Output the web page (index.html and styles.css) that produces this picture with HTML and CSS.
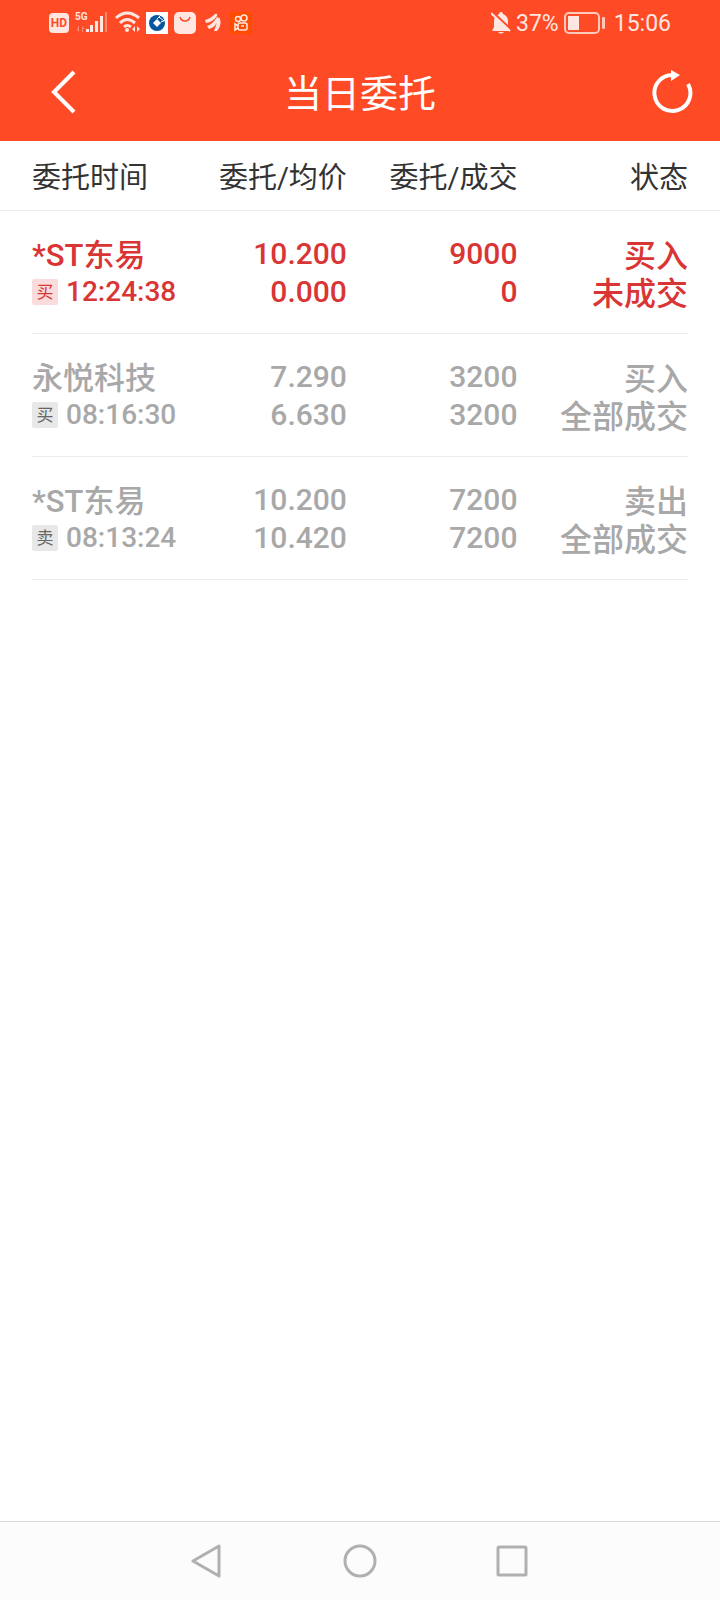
FILE: index.html
```html
<!DOCTYPE html>
<html lang="zh-CN">
<head>
  <meta charset="UTF-8" />
  <meta name="viewport" content="width=device-width, initial-scale=1.0" />
  <title>当日委托</title>
  <link rel="stylesheet" href="styles.css">
</head>
<body>
  <header class="top">
    <div class="status-bar">
      <div class="status-left">
        <span class="hd">HD</span>
        <svg class="signal" width="34" height="24" viewBox="0 0 34 24" fill="#ffe6e0">
          <text x="0" y="9" class="net">5G</text>
          <g opacity="0.4">
            <path d="M4 15v6l-3-3h2v-3zM7 15v6h1v-3h2z" />
            <path d="M30 1h2v20h-2z" />
          </g>
          <path d="M11 18h3v3h-3zM15 14h3v7h-3zM20 10h3v11h-3zM25 5h3v16h-3z" />
        </svg>
        <svg width="25" height="24" viewBox="0 0 25 24" fill="none" stroke="#ffe6e0" stroke-width="3">
          <path d="M1 7Q12 -3 24 7M5 12Q12 5 20 12M9 16Q12 13 16 16" />
          <circle cx="12" cy="19" r="2" fill="#ffe6e0" stroke="none" />
          <path d="M20 15v6l-3-3zM22 15v6l3-3z" fill="#ffe6e0" stroke="none" />
        </svg>
        <svg width="22" height="22" viewBox="0 0 22 22">
          <path fill="#fff" d="M0 0h22v22H0z" />
          <circle cx="11" cy="11" r="8" fill="#07569e" />
          <path fill="#fff" d="M11 7l4 4-4 4-4-4z" />
          <path stroke="#fff" d="M11 7l4-4M15 10l5-2M13 5l5 4" />
        </svg>
        <svg width="22" height="22" viewBox="0 0 22 22">
          <rect width="22" height="22" rx="5" fill="#ffe6e0" />
          <path d="M6 5q1 4 5 4t5-4" fill="none" stroke="#ff4a26" stroke-width="1.4" />
        </svg>
        <svg class="leaf" width="18" height="20" viewBox="0 0 18 20" fill="#ffe6e0">
          <path d="M1 7Q6 6 11 1Q14 0 13 3Q9 9 2 10zM3 13Q9 11 13 4Q15 4 14 7Q12 14 5 16zM10 18Q12 13 14 6Q15 3 16 6Q18 12 13 18z" />
        </svg>
        <svg width="22" height="22" viewBox="0 0 22 22" fill="none" stroke="#ffe6e0" stroke-width="1.6">
          <path fill="#ff4b00" stroke="none" d="M0 0h22v22H0z" />
          <circle cx="8" cy="7" r="2.5" />
          <circle cx="14" cy="6" r="3" />
          <rect x="8" y="11" width="9" height="7" rx="2" />
          <path d="M8 14l-3-2v6l3-2M11 14h3" />
        </svg>
      </div>
      <div class="status-right">
        <svg width="20" height="24" viewBox="0 0 20 24" fill="#ffe6e0">
          <path d="M10 1q2 0 2 2q5 2 5 7v6l2 4H1l2-4v-6q0-5 5-7q0-2 2-2zM7 21h6q-3 3-6 0z" />
          <path d="M0 0l21 20" stroke="#ff4a26" stroke-width="3" />
          <path d="M0 2l19 18" stroke="#ffe6e0" stroke-width="2" />
        </svg>
        <span>37%</span>
        <svg class="battery" width="42" height="22" viewBox="0 0 42 22">
          <rect x="1" y="1" width="34" height="20" rx="4" fill="none" stroke="#ffc9bc" stroke-width="2" />
          <path d="M4 4h11v14H4z" fill="#ffe6e0" />
          <rect x="38" y="5" width="3" height="12" rx="1" fill="#ffc9bc" />
        </svg>
        <span>15:06</span>
      </div>
    </div>
    <div class="title-bar">
      <button type="button" class="icon-btn" aria-label="返回">
        <svg width="26" height="44" viewBox="0 0 26 44" fill="none" stroke="#fff" stroke-width="4">
          <path d="M24 2L4 22l20 20" />
        </svg>
      </button>
      <h1>当日委托</h1>
      <button type="button" class="icon-btn" aria-label="刷新">
        <svg width="42" height="46" viewBox="0 0 42 46">
          <path d="M37 15A18 18 0 1 1 22 6" fill="none" stroke="#fff" stroke-width="4" />
          <path d="M20 1l9 5-9 6z" fill="#fff" />
        </svg>
      </button>
    </div>
  </header>

  <main>
    <table class="orders">
      <thead>
        <tr>
          <th scope="col">委托时间</th>
          <th scope="col">委托/均价</th>
          <th scope="col">委托/成交</th>
          <th scope="col">状态</th>
        </tr>
      </thead>
      <tbody>
        <tr class="pending">
          <td>*ST东易<div class="time"><span class="tag">买</span>12:24:38</div></td>
          <td>10.200<br />0.000</td>
          <td>9000<br />0</td>
          <td>买入<br />未成交</td>
        </tr>
        <tr>
          <td>永悦科技<div class="time"><span class="tag">买</span>08:16:30</div></td>
          <td>7.290<br />6.630</td>
          <td>3200<br />3200</td>
          <td>买入<br />全部成交</td>
        </tr>
        <tr>
          <td>*ST东易<div class="time"><span class="tag">卖</span>08:13:24</div></td>
          <td>10.200<br />10.420</td>
          <td>7200<br />7200</td>
          <td>卖出<br />全部成交</td>
        </tr>
      </tbody>
    </table>
  </main>

  <nav class="nav-bar">
    <button type="button" aria-label="后退">
      <svg width="34" height="36" viewBox="0 0 34 36">
        <path d="M28 3v30L2 18z" />
      </svg>
    </button>
    <button type="button" aria-label="主页">
      <svg width="34" height="36" viewBox="0 0 34 36">
        <circle cx="17" cy="18" r="15" />
      </svg>
    </button>
    <button type="button" aria-label="最近任务">
      <svg width="34" height="36" viewBox="0 0 34 36">
        <rect x="3" y="4" width="28" height="28" rx="1" />
      </svg>
    </button>
  </nav>
</body>
</html>
```
FILE: styles.css
```css
* {
  box-sizing: border-box;
}
body {
  margin: 0;
  min-height: 100vh;
  display: flex;
  flex-direction: column;
  background: #fff;
  font-family: Roboto, "Noto Sans CJK SC", sans-serif;
}
svg {
  display: block;
}
button {
  padding: 0;
  border: none;
  background: none;
  cursor: pointer;
}
.top {
  background: #ff4a26;
  color: #fff;
}
.status-bar {
  display: flex;
  justify-content: space-between;
  align-items: center;
  height: 46px;
  padding: 0 49px;
}
.status-left,
.status-right {
  display: flex;
  align-items: center;
  gap: 6px;
}
.status-right {
  gap: 5px;
  color: #ffe6e0;
  font-size: 23px;
}
.battery {
  margin-right: 3px;
}
.hd {
  width: 20px;
  border-radius: 4px;
  background: #ffe6e0;
  color: #ff4a26;
  font-size: 12px;
  font-weight: 700;
  line-height: 20px;
  text-align: center;
}
.net {
  font-size: 10px;
  font-weight: 700;
}
.leaf {
  margin: 0 2px;
}
.title-bar {
  display: flex;
  justify-content: space-between;
  align-items: center;
  height: 95px;
  padding: 0 27px 4px;
}
.title-bar h1 {
  margin: 0;
  padding-top: 5px;
  font-size: 38px;
  font-weight: 400;
  line-height: 56px;
}
.icon-btn {
  width: 72px;
  display: flex;
  justify-content: center;
}
.icon-btn:last-child {
  justify-content: flex-end;
}
main {
  flex: 1;
}
.orders,
.orders thead,
.orders tbody {
  display: block;
}
.orders tr {
  display: grid;
  grid-template-columns: 24fr 24fr 26fr 26fr;
  margin: 0 32px;
  padding: 24px 0 20px;
  border-bottom: 1px solid #ebebeb;
  color: #a8a8a8;
  font-size: 31px;
  font-weight: 500;
  line-height: 38px;
}
.orders thead tr {
  margin: 0;
  padding: 18px 32px 13px;
  color: #333;
  font-size: 29px;
}
.orders th,
.orders td {
  padding: 0;
  font-weight: inherit;
  text-align: right;
  white-space: nowrap;
}
.orders th {
  font-weight: 400;
}
.orders th:first-child,
.orders td:first-child {
  text-align: left;
}
.orders td:nth-child(2),
.orders td:nth-child(3) {
  font-size: 30px;
}
.orders td:first-child,
.orders td:last-child {
  padding-top: 2px;
}
.orders td:last-child {
  font-size: 32px;
}
.time {
  display: flex;
  align-items: center;
  gap: 8px;
  font-size: 28px;
  line-height: 34px;
}
.tag {
  width: 26px;
  border-radius: 2px;
  background: #e8e8e8;
  color: #666;
  font-size: 17px;
  font-weight: 400;
  line-height: 26px;
  text-align: center;
}
.orders .pending {
  color: #d93535;
}
.pending .tag {
  background: #fbdcdc;
  color: #d93535;
}
.nav-bar {
  display: flex;
  justify-content: center;
  align-items: center;
  gap: 118px;
  height: 79px;
  border-top: 1px solid #dcdcdc;
  background: #fcfcfc;
}
.nav-bar svg {
  fill: none;
  stroke: #b0b0b0;
  stroke-width: 3;
  stroke-linejoin: round;
}
```
